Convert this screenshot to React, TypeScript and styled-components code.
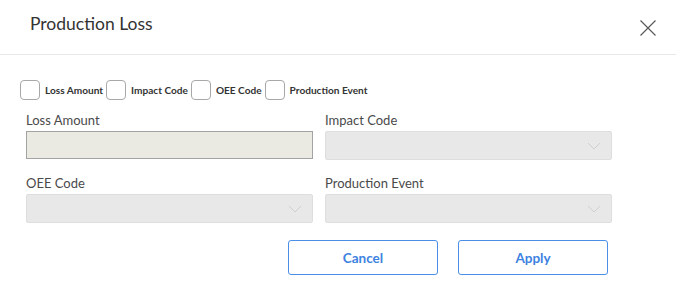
import styled, { createGlobalStyle } from "styled-components";

const GlobalStyle = createGlobalStyle`
  html, body {
    margin: 0;
    padding: 0;
    background: #ffffff;
  }
  * {
    box-sizing: border-box;
  }
`;

const Dialog = styled.div`
  width: 676px;
  height: 308px;
  background: #ffffff;
  font-family: Lato, "Liberation Sans", sans-serif;
  color: #333333;
  display: flex;
  flex-direction: column;
`;

const Header = styled.div`
  height: 55px;
  padding: 0 20px 0 30px;
  display: flex;
  align-items: center;
  justify-content: space-between;
  border-bottom: 1px solid #e8e8e8;
`;

const Title = styled.h2`
  margin: 0 0 8px;
  font-size: 17.5px;
  font-weight: 400;
  color: #333333;
`;

const CloseButton = styled.button`
  border: none;
  background: none;
  padding: 0;
  width: 16px;
  height: 16px;
  margin-top: 2px;
  cursor: pointer;
  display: flex;
`;

const Body = styled.div`
  padding: 25px 68px 0 20px;
  display: flex;
  flex-direction: column;
`;

const CheckRow = styled.div`
  display: flex;
  align-items: center;
  gap: 3px;
`;

const CheckItem = styled.label`
  display: flex;
  align-items: center;
  gap: 5px;
  font-size: 10.1px;
  font-weight: 700;
  color: #333333;
`;

const CheckBox = styled.span`
  width: 20px;
  height: 20px;
  border: 1px solid #a8a8a8;
  border-radius: 4px;
  background: #ffffff;
`;

const FieldGrid = styled.div`
  display: grid;
  grid-template-columns: 287px 287px;
  column-gap: 12px;
  row-gap: 16px;
  margin: 13px 0 0 6px;
`;

const Field = styled.div`
  display: flex;
  flex-direction: column;
  gap: 3px;
`;

const FieldLabel = styled.span`
  font-size: 13px;
  color: #4a4a4a;
  line-height: 15px;
`;

const TextInput = styled.div`
  height: 28px;
  background: #eae9e2;
  border: 1px solid #a3a3a3;
`;

const Select = styled.div`
  height: 29px;
  background: #e8e8e8;
  border: 1px solid #dedede;
  border-radius: 2px;
  display: flex;
  align-items: center;
  justify-content: flex-end;
  padding-right: 10px;
`;

const Actions = styled.div`
  display: flex;
  justify-content: flex-end;
  gap: 20px;
  margin-top: 17px;
`;

const Button = styled.button`
  width: 150px;
  height: 35px;
  border: 1px solid #4a8ee6;
  border-radius: 3px;
  background: #ffffff;
  color: #3d82e0;
  font-family: Lato, "Liberation Sans", sans-serif;
  font-size: 13.5px;
  font-weight: 700;
  cursor: pointer;
`;

const Chevron = () => (
  <svg width="14" height="8" viewBox="0 0 14 8">
    <path d="M1 1 L7 7 L13 1" fill="none" stroke="#cfcfcf" strokeWidth="1" />
  </svg>
);

const checks = ["Loss Amount", "Impact Code", "OEE Code", "Production Event"];

export default function App() {
  return (
    <Dialog>
      <GlobalStyle />
      <Header>
        <Title>Production Loss</Title>
        <CloseButton aria-label="Close">
          <svg width="16" height="16" viewBox="0 0 16 16">
            <path d="M0.5 0.5 L15.5 15.5 M15.5 0.5 L0.5 15.5" stroke="#5a5a5a" strokeWidth="1.2" />
          </svg>
        </CloseButton>
      </Header>
      <Body>
        <CheckRow>
          {checks.map((c) => (
            <CheckItem key={c}>
              <CheckBox />
              {c}
            </CheckItem>
          ))}
        </CheckRow>
        <FieldGrid>
          <Field>
            <FieldLabel>Loss Amount</FieldLabel>
            <TextInput />
          </Field>
          <Field>
            <FieldLabel>Impact Code</FieldLabel>
            <Select>
              <Chevron />
            </Select>
          </Field>
          <Field>
            <FieldLabel>OEE Code</FieldLabel>
            <Select>
              <Chevron />
            </Select>
          </Field>
          <Field>
            <FieldLabel>Production Event</FieldLabel>
            <Select>
              <Chevron />
            </Select>
          </Field>
        </FieldGrid>
        <Actions>
          <Button>Cancel</Button>
          <Button>Apply</Button>
        </Actions>
      </Body>
    </Dialog>
  );
}
